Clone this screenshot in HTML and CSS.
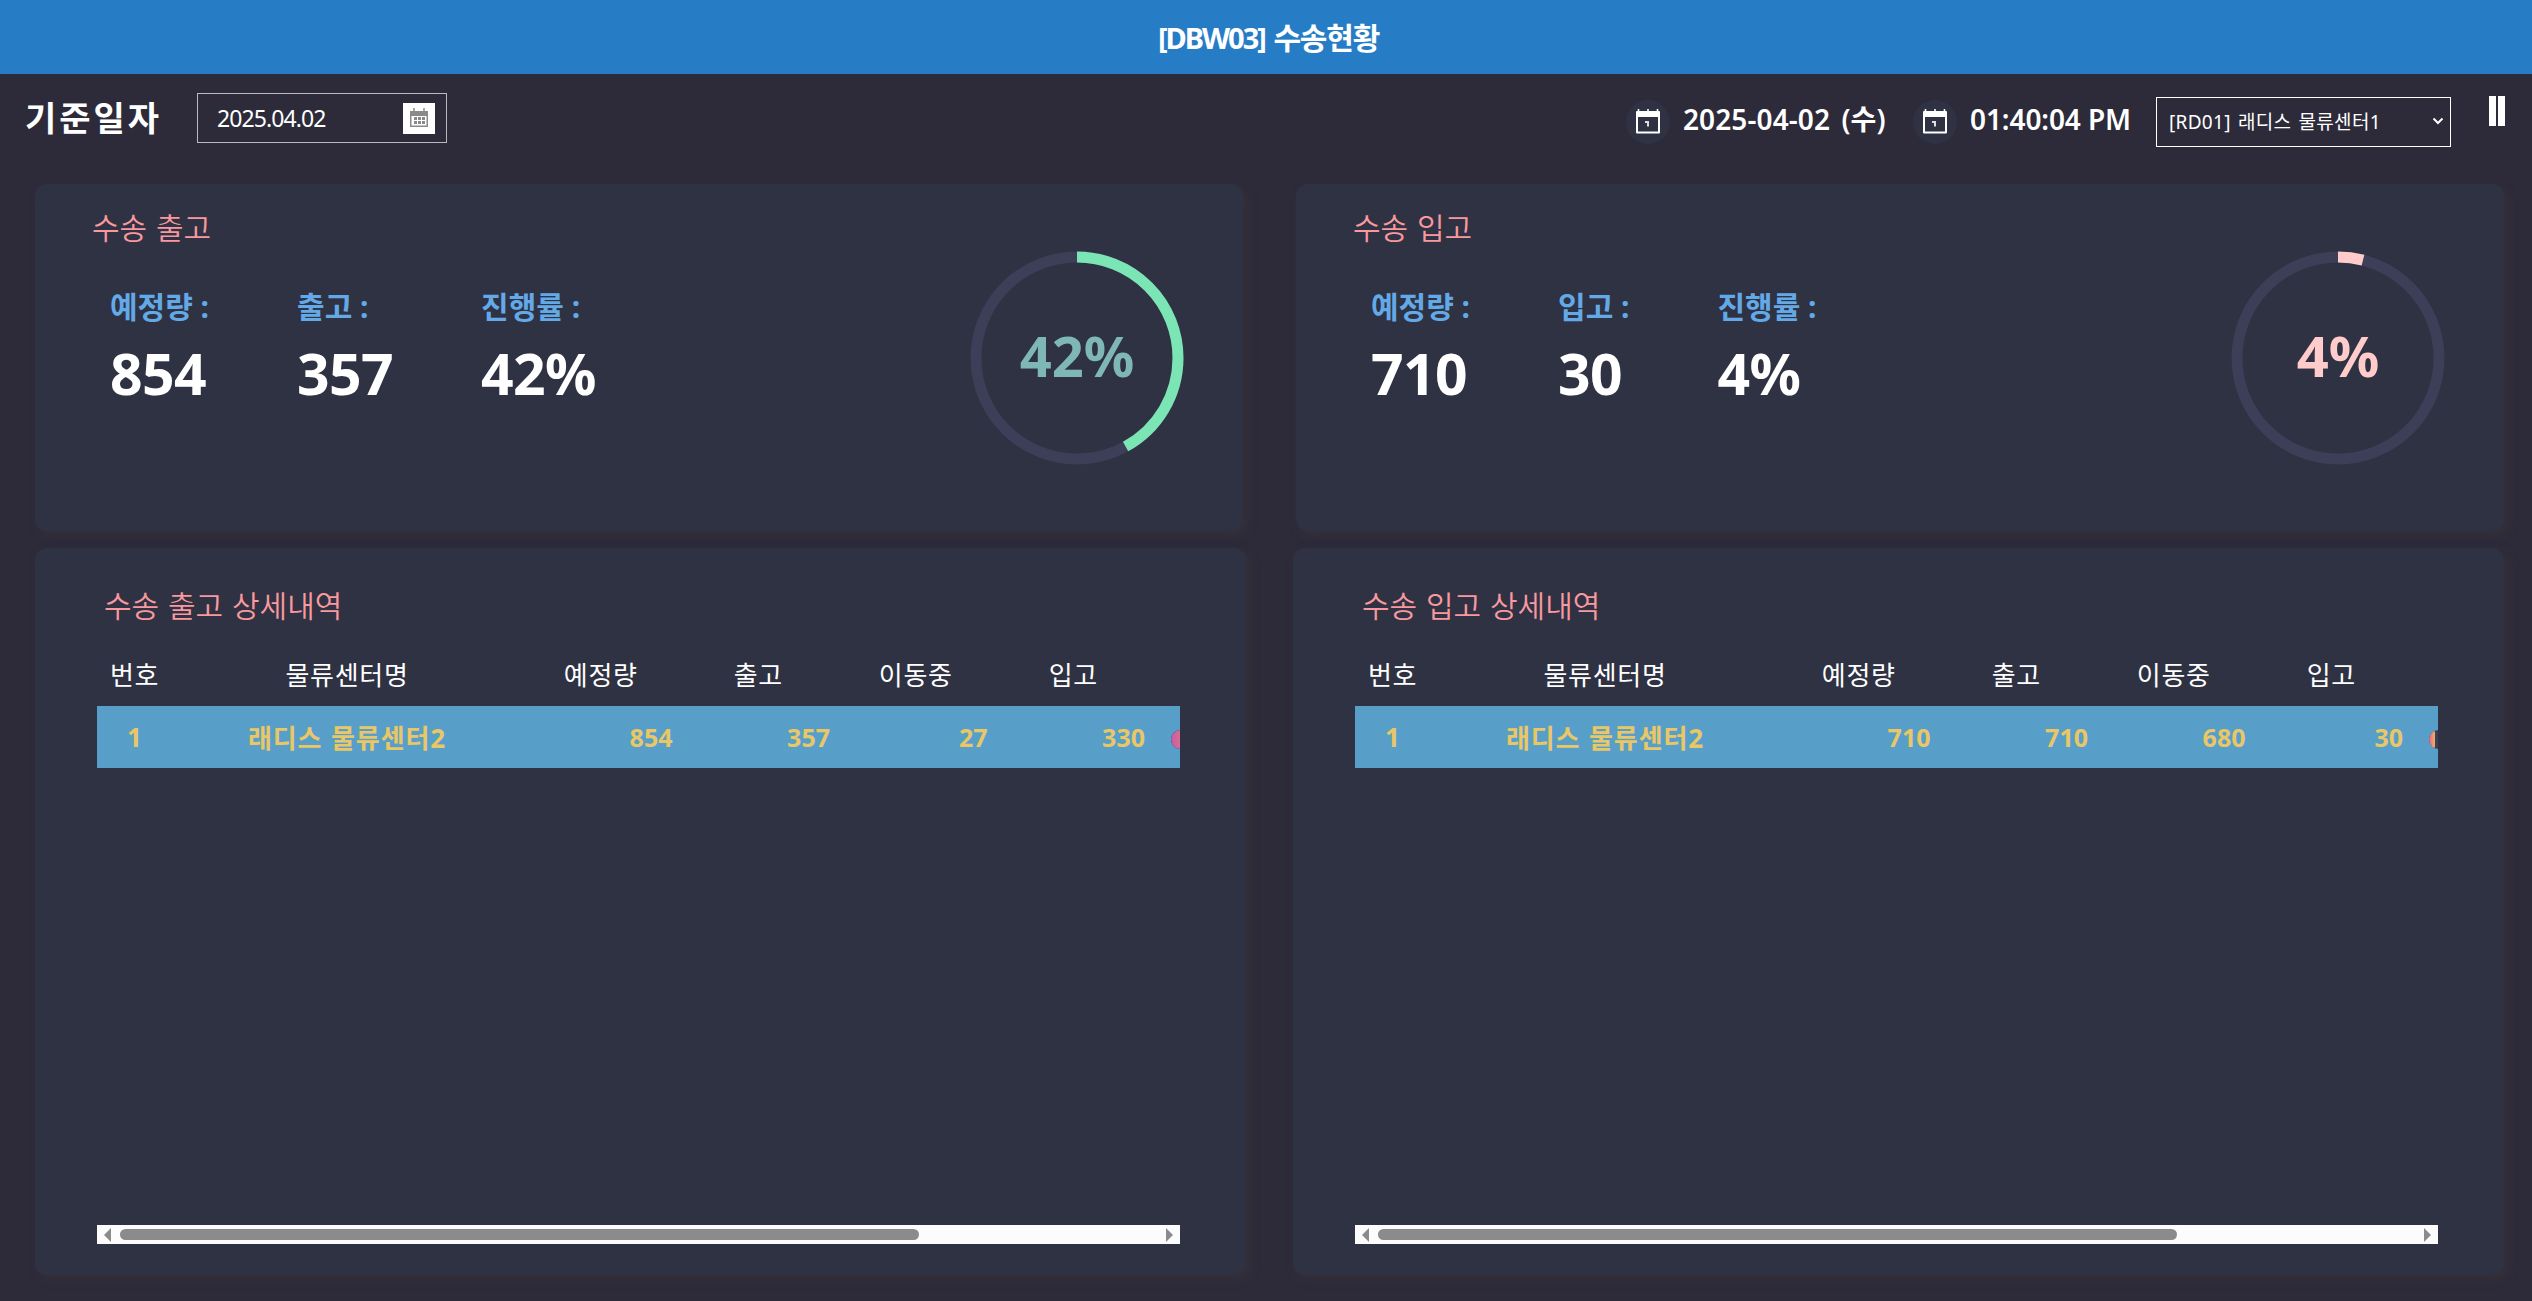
FILE: index.html
```html
<!DOCTYPE html>
<html lang="ko">
<head>
  <meta charset="UTF-8" />
  <meta name="viewport" content="width=device-width, initial-scale=1.0"/>
  <title>[DBW03] 수송현황</title>
  <link rel="stylesheet" href="styles.css">
</head>
<body>
  <header class="title-bar">
    <h1><span class="code">[DBW03]</span> 수송현황</h1>
  </header>

  <div class="toolbar">
    <span class="toolbar-label">기준일자</span>
    <div class="date-input">
      <span>2025.04.02</span>
      <button class="date-button">
        <svg width="20" height="20" viewBox="0 0 20 20">
          <path d="M1 3h18v16H1z" fill="#8a8a8a"/>
          <path d="M5 0v4M15 0v4" stroke="#8a8a8a" stroke-width="1.5"/>
          <path d="M2.5 8h15v9.500h-15z" fill="#fff"/>
          <path d="M5 9h3v3H5zM9 9h3v3H9zM13 9h3v3h-3zM5 13h3v3H5zM9 13h3v3H9zM13 13h3v3h-3z" fill="#8a8a8a"/>
        </svg>
      </button>
    </div>

    <div class="toolbar-right">
      <span class="round-icon">
        <svg width="26" height="26" viewBox="0 0 26 26">
          <path d="M2 3h22v20.500H2z" fill="none" stroke="#fff" stroke-width="2" stroke-linejoin="round"/>
          <path d="M1 3h24v5H1z" fill="#fff"/>
          <path d="M3.500 0v4M13 0v4M22.500 0v4" stroke="#fff" stroke-width="1.600"/>
          <path d="M10 13h3v4.500" fill="none" stroke="#dddde4" stroke-width="2"/>
        </svg>
      </span>
      <span class="clock clock-date">2025-04-02 (수)</span>
      <span class="round-icon">
        <svg width="26" height="26" viewBox="0 0 26 26">
          <path d="M2 3h22v20.500H2z" fill="none" stroke="#fff" stroke-width="2" stroke-linejoin="round"/>
          <path d="M1 3h24v5H1z" fill="#fff"/>
          <path d="M3.500 0v4M13 0v4M22.500 0v4" stroke="#fff" stroke-width="1.600"/>
          <path d="M10 13h3v4.500" fill="none" stroke="#dddde4" stroke-width="2"/>
        </svg>
      </span>
      <span class="clock clock-time">01:40:04 PM</span>
      <div class="center-select">
        <span>[RD01] 래디스 물류센터1</span>
        <svg width="12" height="8" viewBox="0 0 12 8">
          <path d="M1.500 1.500L6 6l4.500-4.500" fill="none" stroke="#fff" stroke-width="2"/>
        </svg>
      </div>
      <div class="pause"><i></i><i></i></div>
    </div>
  </div>

  <main>
    <section class="summary-row">
      <div class="card summary">
        <div class="summary-info">
          <h2>수송 출고</h2>
          <dl class="stats">
            <div><dt>예정량 :</dt><dd>854</dd></div>
            <div><dt>출고 :</dt><dd>357</dd></div>
            <div><dt>진행률 :</dt><dd>42%</dd></div>
          </dl>
        </div>
        <svg class="ring ring-out" width="214" height="214" viewBox="0 0 214 214">
          <circle class="ring-track" cx="107" cy="107" r="101"/>
          <circle class="ring-value" cx="107" cy="107" r="101" pathLength="100" stroke-dasharray="42 100" transform="rotate(-90 107 107)"/>
          <text x="107" y="126">42%</text>
        </svg>
      </div>

      <div class="card summary">
        <div class="summary-info">
          <h2>수송 입고</h2>
          <dl class="stats">
            <div><dt>예정량 :</dt><dd>710</dd></div>
            <div><dt>입고 :</dt><dd>30</dd></div>
            <div><dt>진행률 :</dt><dd>4%</dd></div>
          </dl>
        </div>
        <svg class="ring ring-in" width="214" height="214" viewBox="0 0 214 214">
          <circle class="ring-track" cx="107" cy="107" r="101"/>
          <circle class="ring-value" cx="107" cy="107" r="101" pathLength="100" stroke-dasharray="4 100" transform="rotate(-90 107 107)"/>
          <text x="107" y="126">4%</text>
        </svg>
      </div>
    </section>

    <section class="detail-row">
      <div class="card detail">
        <h2>수송 출고 상세내역</h2>
        <div class="grid">
          <div class="grid-line grid-head">
            <span>번호</span><span>물류센터명</span><span>예정량</span><span>출고</span><span>이동중</span><span>입고</span><span></span>
          </div>
          <div class="grid-line grid-body">
            <span>1</span><span class="name">래디스 물류센터2</span><span class="num">854</span><span class="num">357</span><span class="num">27</span><span class="num">330</span>
            <span class="progress"><b class="bar-out" style="width: 42%"></b></span>
          </div>
        </div>
        <div class="scrollbar">
          <i class="arrow-left"></i><div class="track"><div class="thumb"></div></div><i class="arrow-right"></i>
        </div>
      </div>

      <div class="card detail">
        <h2>수송 입고 상세내역</h2>
        <div class="grid">
          <div class="grid-line grid-head">
            <span>번호</span><span>물류센터명</span><span>예정량</span><span>출고</span><span>이동중</span><span>입고</span><span></span>
          </div>
          <div class="grid-line grid-body">
            <span>1</span><span class="name">래디스 물류센터2</span><span class="num">710</span><span class="num">710</span><span class="num">680</span><span class="num">30</span>
            <span class="progress"><b class="bar-in" style="width: 2%"></b></span>
          </div>
        </div>
        <div class="scrollbar">
          <i class="arrow-left"></i><div class="track"><div class="thumb"></div></div><i class="arrow-right"></i>
        </div>
      </div>
    </section>
  </main>
</body>
</html>
```
FILE: styles.css
```css
* {
  box-sizing: border-box;
  margin: 0;
  padding: 0;
}
body {
  font-family: "Noto Sans", "Noto Sans CJK KR", sans-serif;
  background: #2d2b3a;
  color: #fff;
  height: 1301px;
  overflow: hidden;
  white-space: nowrap;
}
.title-bar {
  height: 74px;
  background: #267dc6;
  text-align: center;
}
.title-bar h1 {
  padding-left: 5px;
  font-size: 30px;
  font-weight: 700;
  line-height: 75px;
  letter-spacing: -1.2px;
  word-spacing: 2px;
}
.title-bar .code {
  font-size: 29px;
  letter-spacing: -2px;
}

/* toolbar */
.toolbar {
  display: flex;
  align-items: flex-start;
  height: 110px;
  padding: 19px 26px 0 25px;
}
.toolbar-label {
  width: 172px;
  font-size: 34px;
  font-weight: bold;
  line-height: 51px;
  letter-spacing: 3px;
}
.date-input {
  display: flex;
  align-items: center;
  justify-content: space-between;
  width: 250px;
  height: 50px;
  padding: 0 11px 0 19px;
  border: 1px solid #b9b9c0;
  font-size: 23px;
  letter-spacing: -0.9px;
}
.date-button {
  width: 32px;
  height: 31px;
  padding-top: 3px;
  border: none;
  background: #fff;
}
.toolbar-right {
  display: flex;
  align-items: flex-start;
  margin-left: auto;
}
.round-icon {
  display: flex;
  align-items: center;
  justify-content: center;
  width: 44px;
  height: 44px;
  margin-top: 7px;
  border-radius: 50%;
  background: #2f3242;
}
.clock {
  font-size: 28px;
  font-weight: 650;
  line-height: 52px;
  padding-left: 13px;
}
.clock-date {
  width: 243px;
  letter-spacing: 0.1px;
  word-spacing: 4px;
}
.clock-time {
  width: 199px;
  letter-spacing: -0.1px;
}
.center-select {
  display: flex;
  align-items: center;
  justify-content: space-between;
  width: 295px;
  height: 50px;
  margin-top: 4px;
  padding: 0 6px 2px 12px;
  border: 1px solid #fff;
  font-size: 19px;
  letter-spacing: 0.3px;
  word-spacing: 2px;
}
.pause {
  display: flex;
  gap: 2px;
  margin: 3px 1px 0 38px;
}
.pause i {
  width: 7px;
  height: 30px;
  background: #fff;
}

/* cards */
.card {
  min-width: 0;
  border-radius: 12px;
  background: #2f3242;
  box-shadow: 4px 4px 10px #35303a;
}
.card h2 {
  color: #f9999f;
  font-size: 30px;
  font-weight: 350;
  line-height: 40px;
  word-spacing: 1px;
}
.summary-row {
  display: flex;
  gap: 53px;
  height: 347px;
  padding: 0 28px 0 35px;
}
.summary {
  display: flex;
  flex: 1;
  justify-content: space-between;
  padding: 24px 59px 0 57px;
}
.stats {
  display: flex;
  gap: 88px;
  padding: 37px 0 0 18px;
}
.stats dt {
  color: #63a9e8;
  font-size: 30px;
  font-weight: bold;
  line-height: 44px;
}
.stats dd {
  font-size: 57px;
  font-weight: 700;
  line-height: 89px;
  letter-spacing: -0.6px;
}
.ring {
  margin-top: 43px;
}
.ring circle {
  fill: none;
  stroke-width: 11;
}
.ring-track {
  stroke: #3c3f57;
}
.ring text {
  font-size: 56px;
  font-weight: 700;
  text-anchor: middle;
}
.ring-out .ring-value {
  stroke: #7ce5b5;
}
.ring-out text {
  fill: #7fb6b6;
}
.ring-in .ring-value {
  stroke: #ffcccb;
}
.ring-in text {
  fill: #ffcccb;
}

/* detail tables */
.detail-row {
  display: flex;
  gap: 47px;
  height: 744px;
  padding: 17px 28px 0 35px;
}
.detail {
  display: flex;
  flex: 1;
  flex-direction: column;
  padding: 38px 66px 31px 62px;
}
.detail h2 {
  padding-left: 7px;
}
.grid {
  flex: 1;
  margin-top: 2px;
  overflow: hidden;
}
.grid-line {
  display: grid;
  grid-template-columns: 75px 350px 157.5px 157.5px 157.5px 157.5px 361px;
  width: 1416px;
  align-items: center;
  text-align: center;
  font-size: 26px;
}
.grid-head {
  height: 78px;
  padding-top: 13px;
  letter-spacing: 0.7px;
}
.grid-body {
  height: 62px;
  background: #579fc9;
  color: #e9c767;
  font-weight: bold;
}
.grid-body .name {
  letter-spacing: 0.9px;
  word-spacing: 1px;
}
.grid-body .num {
  padding-right: 7px;
  text-align: right;
  font-size: 25px;
}
.progress {
  height: 19px;
  margin: 5px 20px 0 19px;
  border-radius: 10px;
  background: #3c3f57;
  overflow: hidden;
}
.progress b {
  display: block;
  height: 19px;
  border-radius: 10px;
}
.bar-out {
  background: linear-gradient(90deg, #c05fa6, #e8708e 10%, #f5b05c);
}
.bar-in {
  border-radius: 10px 0 0 10px;
  background: linear-gradient(90deg, #d86a8e, #f5b05c);
}
.scrollbar {
  display: flex;
  align-items: center;
  height: 19px;
  padding: 0 7px;
  background: #fcfcfc;
}
.track {
  flex: 1;
  margin: 0 9px;
}
.thumb {
  width: 799px;
  height: 11px;
  border-radius: 6px;
  background: #8b8b8b;
}
.arrow-left,
.arrow-right {
  border: 7px solid transparent;
}
.arrow-left {
  border-left: none;
  border-right-color: #8b8b8b;
}
.arrow-right {
  border-right: none;
  border-left-color: #8b8b8b;
}
```
